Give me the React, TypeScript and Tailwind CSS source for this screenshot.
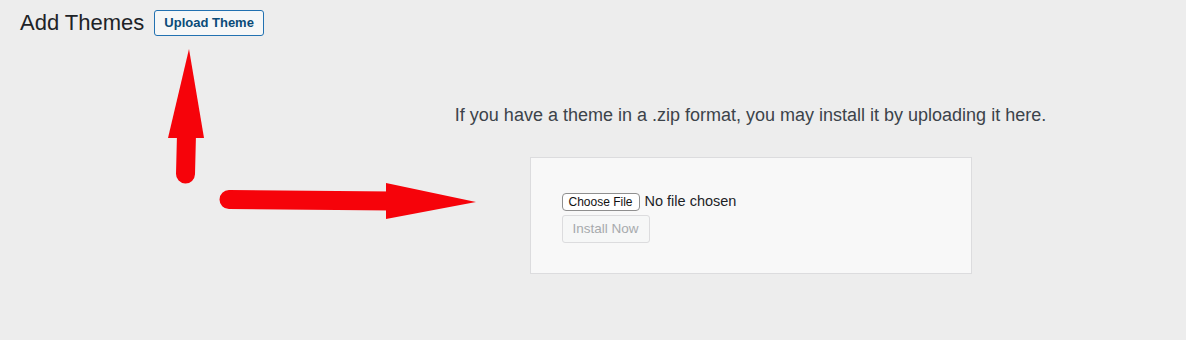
import React from "react";

const font = { fontFamily: '"Liberation Sans", Arial, sans-serif' };

function Arrows() {
  return (
    <svg
      className="pointer-events-none absolute left-0 top-0"
      width="1186"
      height="340"
      viewBox="0 0 1186 340"
    >
      {/* up arrow */}
      <path d="M185.5 174 L186.5 134" stroke="#f6030a" strokeWidth="19" strokeLinecap="round" />
      <polygon points="189,49 168,138 204,138" fill="#f6030a" />
      {/* right arrow */}
      <path d="M229 199.5 L392 201" stroke="#f6030a" strokeWidth="19" strokeLinecap="round" />
      <polygon points="386,183 476,202 386,219" fill="#f6030a" />
    </svg>
  );
}

export default function App() {
  return (
    <div className="relative h-[340px] w-[1186px] overflow-hidden bg-[#ededed]" style={font}>
      <div className="flex items-center gap-[10px] pl-5 pt-[10px]">
        <h1 className="text-[22px] leading-[26px] text-[#1d2327]">Add Themes</h1>
        <button className="h-[26px] rounded-[3px] border border-[#2271b1] bg-[#f6f7f7] px-[9px] text-[13px] font-bold text-[#0a4b78]">
          Upload Theme
        </button>
      </div>

      <div className="ml-[315px] flex w-[871px] flex-col items-center pt-[68px]">
        <p className="text-[18px] leading-[22px] text-[#3c434a]">
          If you have a theme in a .zip format, you may install it by uploading it here.
        </p>
        <div className="mt-[31px] flex h-[117px] w-[442px] flex-col items-start border border-[#dcdcde] bg-[#f8f8f8] pl-[31px] pt-[35px]">
          <div className="flex h-[18px] items-center gap-[5px]">
            <span className="flex h-[18px] items-center rounded-[4px] border border-[#8f8f8f] bg-white px-[6px] text-[12px] text-[#111]">
              Choose File
            </span>
            <span className="text-[14.5px] text-[#1d2327]">No file chosen</span>
          </div>
          <button className="mt-[4px] h-[28px] rounded-[3px] border border-[#dcdcde] bg-[#f6f7f7] px-[10px] text-[13.5px] text-[#a7aaad]">
            Install Now
          </button>
        </div>
      </div>

      <Arrows />
    </div>
  );
}
